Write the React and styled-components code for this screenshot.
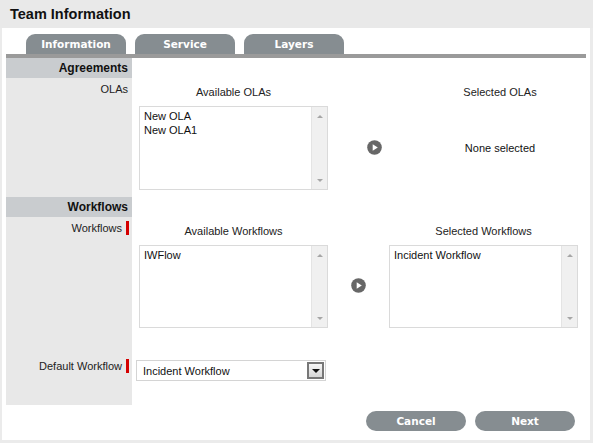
import React from 'react';
import styled, { createGlobalStyle } from 'styled-components';

const Global = createGlobalStyle`
  html, body { margin: 0; padding: 0; background: #ebebeb; }
  body { font-family: "Liberation Sans", Arial, sans-serif; font-size: 11px; color: #111; }
  * { box-sizing: border-box; }
`;

const Page = styled.div`
  width: 593px;
  height: 443px;
  display: flex;
  flex-direction: column;
  overflow: hidden;
`;

const Header = styled.div`
  height: 28px;
  flex: none;
  display: flex;
  align-items: center;
  padding: 0 0 1px 10px;
  background: #e9e9e9;
  font-weight: bold;
  font-size: 14.5px;
  color: #111;
`;

const Panel = styled.div`
  flex: 1;
  margin: 0 3px 3px 2px;
  background: #fff;
  padding: 6px 4px 0;
  display: flex;
  flex-direction: column;
`;

const TabStrip = styled.div`
  display: flex;
  gap: 9px;
  padding-left: 20px;
  border-bottom: 4px solid #9a9a9a;
`;

const Tab = styled.div`
  width: 100px;
  height: 20px;
  border-radius: 9px 9px 0 0;
  background: #868d91;
  color: #fff;
  font: bold 10.5px "DejaVu Sans", Verdana, sans-serif;
  display: flex;
  align-items: center;
  justify-content: center;
`;

const Form = styled.div`
  display: grid;
  grid-template-columns: 126px 1fr;
`;

const SectionHead = styled.div`
  height: 20px;
  line-height: 20px;
  background: #c9cccf;
  font-weight: bold;
  font-size: 12px;
  text-align: right;
  padding-right: 4px;
  color: #111;
`;

const SectionFill = styled.div`
  height: 20px;
`;

const Label = styled.div`
  background: #e8e8e8;
  display: flex;
  justify-content: flex-end;
  align-items: flex-start;
  gap: 4px;
  padding: 4px ${p => (p.$required ? 3 : 4)}px 0 0;
  line-height: 14px;
  color: #222;
`;

const Required = styled.span`
  width: 3px;
  height: 14px;
  background: #d40000;
`;

const Picker = styled.div`
  display: grid;
  grid-template-columns: ${p => p.$cols};
  grid-template-rows: 14px auto;
  row-gap: 7px;
  padding: 7px 0 ${p => p.$bottom}px 7px;
`;

const Heading = styled.div`
  line-height: 14px;
  text-align: center;
  color: #222;
`;

const ListBox = styled.div`
  height: ${p => p.$h}px;
  border: 1px solid #dadada;
  display: flex;
  background: #fff;
`;

const Items = styled.div`
  flex: 1;
  padding: 2px 4px;
  line-height: 14px;
  color: #111;
`;

const Scroll = styled.div`
  width: 16px;
  background: #f0f0f0;
  border-left: 1px solid #e4e4e4;
  display: flex;
  flex-direction: column;
  justify-content: space-between;
  align-items: center;
  padding: 8px 0 7px;
`;

const Arrow = styled.span`
  width: 0;
  height: 0;
  border-left: 3.5px solid transparent;
  border-right: 3.5px solid transparent;
  ${p => (p.$down ? 'border-top: 3px solid #a6a6a6;' : 'border-bottom: 3px solid #a6a6a6;')}
`;

const Move = styled.div`
  align-self: center;
  justify-self: center;
  width: 15px;
  height: 15px;
  margin-top: -2px;
  display: flex;
`;

const Empty = styled.div`
  align-self: center;
  text-align: center;
  color: #111;
`;

const DefaultRow = styled.div`
  padding: 5px 0 24px 4px;
`;

const Select = styled.div`
  width: 190px;
  height: 21px;
  border: 1px solid #d4d4d4;
  display: flex;
  align-items: center;
  justify-content: space-between;
  padding: 0 1px 0 6px;
  font-size: 11px;
  color: #111;
`;

const DropButton = styled.div`
  width: 17px;
  height: 17px;
  border: 2px solid #777;
  background: linear-gradient(#f6f6f6, #d6d6d6);
  display: flex;
  align-items: center;
  justify-content: center;
`;

const DropArrow = styled.span`
  width: 0;
  height: 0;
  border-left: 4px solid transparent;
  border-right: 4px solid transparent;
  border-top: 4px solid #111;
`;

const Actions = styled.div`
  display: flex;
  justify-content: flex-end;
  gap: 9px;
  padding: 6px 11px 0 0;
`;

const Button = styled.div`
  width: 100px;
  height: 20px;
  border-radius: 10px;
  background: #868d91;
  color: #fff;
  font: bold 10.5px "DejaVu Sans", Verdana, sans-serif;
  display: flex;
  align-items: center;
  justify-content: center;
`;

const PlayIcon = () => (
  <svg width="15" height="15" viewBox="0 0 15 15">
    <circle cx="7.5" cy="7.5" r="7.3" fill="#676767" />
    <path d="M5.7 4.2 L10.8 7.5 L5.7 10.8 Z" fill="#fff" />
  </svg>
);

const List = ({ items, h }) => (
  <ListBox $h={h}>
    <Items>
      {items.map(i => (
        <div key={i}>{i}</div>
      ))}
    </Items>
    <Scroll>
      <Arrow />
      <Arrow $down />
    </Scroll>
  </ListBox>
);

export default function App() {
  return (
    <Page>
      <Global />
      <Header>Team Information</Header>
      <Panel>
        <TabStrip>
          <Tab>Information</Tab>
          <Tab>Service</Tab>
          <Tab>Layers</Tab>
        </TabStrip>
        <Form>
          <SectionHead>Agreements</SectionHead>
          <SectionFill />

          <Label>OLAs</Label>
          <Picker $cols="189px 92px 160px" $bottom={7}>
            <Heading>Available OLAs</Heading>
            <div />
            <Heading>Selected OLAs</Heading>
            <List items={['New OLA', 'New OLA1']} h={84} />
            <Move><PlayIcon /></Move>
            <Empty>None selected</Empty>
          </Picker>

          <SectionHead>Workflows</SectionHead>
          <SectionFill />

          <Label $required>
            Workflows<Required />
          </Label>
          <Picker $cols="189px 61px 189px" $bottom={27}>
            <Heading>Available Workflows</Heading>
            <div />
            <Heading>Selected Workflows</Heading>
            <List items={['IWFlow']} h={83} />
            <Move><PlayIcon /></Move>
            <List items={['Incident Workflow']} h={83} />
          </Picker>

          <Label $required>
            Default Workflow<Required />
          </Label>
          <DefaultRow>
            <Select>
              <span>Incident Workflow</span>
              <DropButton><DropArrow /></DropButton>
            </Select>
          </DefaultRow>
        </Form>
        <Actions>
          <Button>Cancel</Button>
          <Button>Next</Button>
        </Actions>
      </Panel>
    </Page>
  );
}
